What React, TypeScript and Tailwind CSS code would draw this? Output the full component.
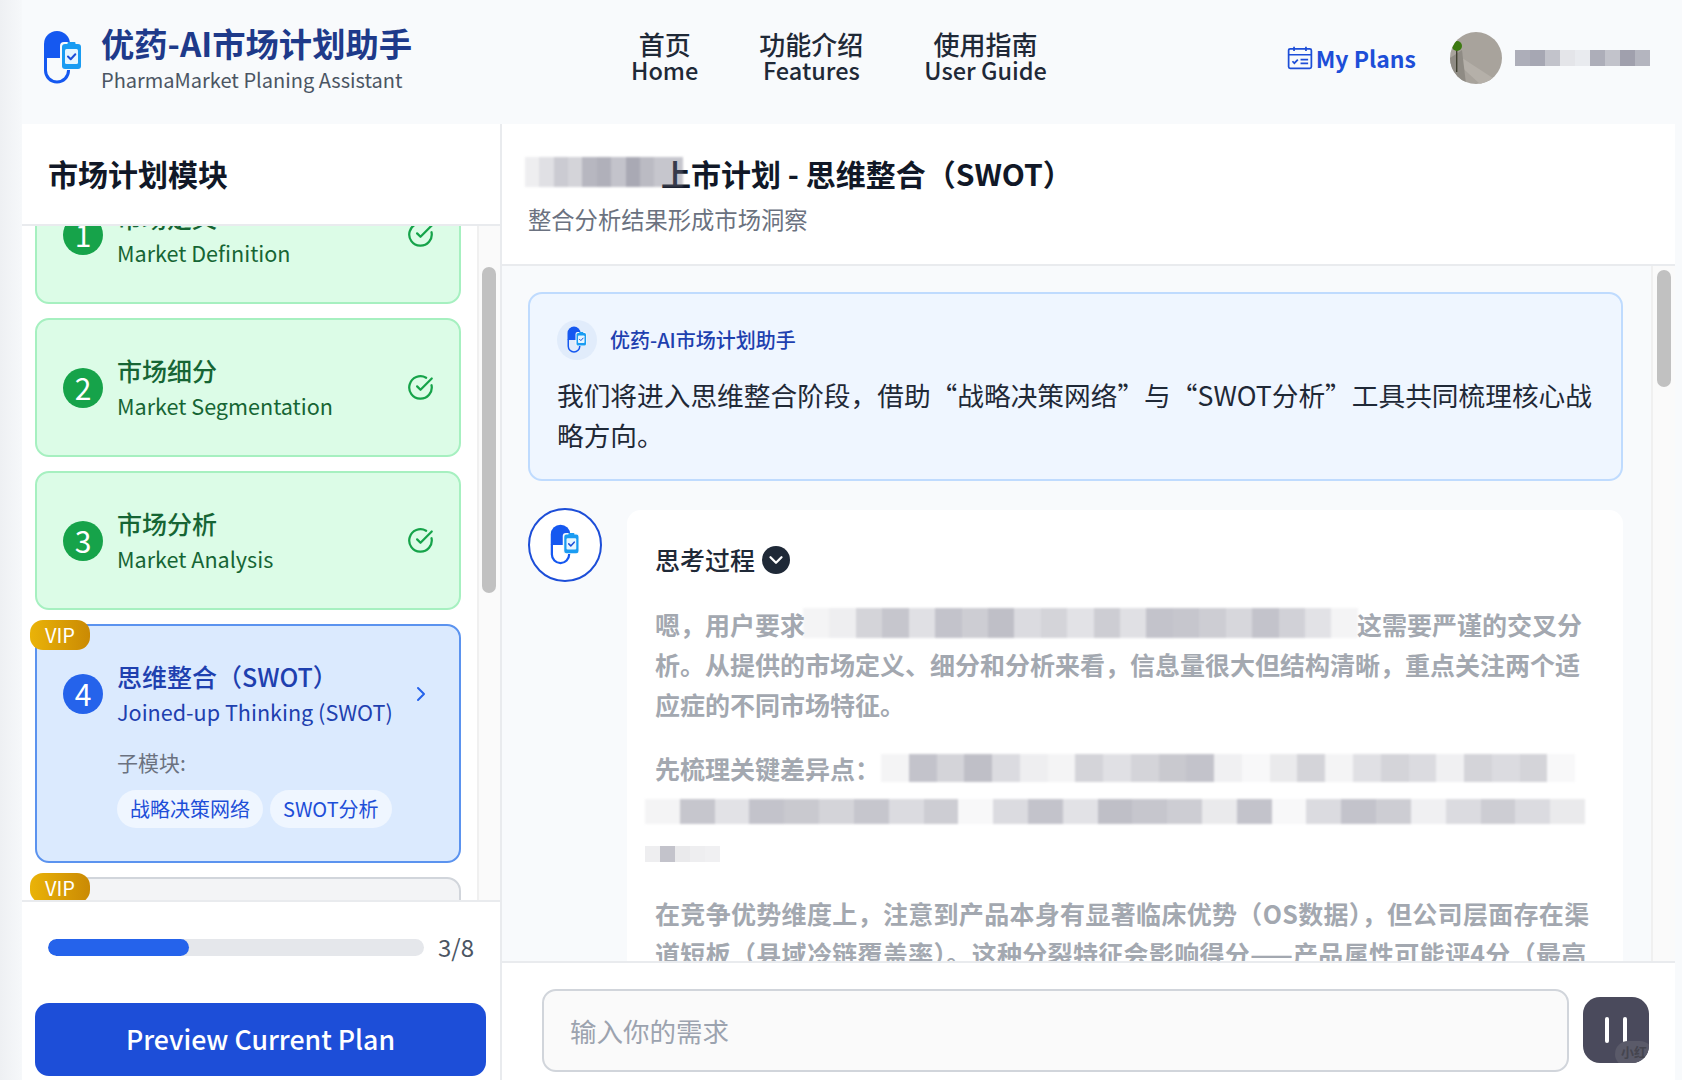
import React from "react";
import { ChevronDown, ChevronRight, CircleCheckBig } from "lucide-react";
import { clsx } from "clsx";

// pixelated cover over private text, each value is one cell's darkness
function Mosaic({ cells, className }: { cells: number[]; className?: string }) {
  return (
    <div className={clsx("flex", className)}>
      {cells.map((v, i) => (
        <span key={i} className="h-full flex-1" style={{ backgroundColor: `rgba(112,112,130,${v})` }} />
      ))}
    </div>
  );
}

function Logo({ className }: { className?: string }) {
  return (
    <svg viewBox="0 0 40 56" className={className} fill="none">
      <path d="M1 28V14a13 13 0 0 1 26 0v14z" fill="#1558f0" />
      <path d="M2.5 28v12.5a11.5 11.5 0 0 0 23 0V38" stroke="#1558f0" strokeWidth="3" strokeLinecap="round" />
      <rect x="17" y="12" width="22" height="28" rx="4" fill="#f8fafc" />
      <rect x="19" y="14" width="19" height="25" rx="3" fill="#1a9cf2" />
      <rect x="22" y="19" width="13" height="15" rx="1.5" fill="#e6f6ff" />
      <rect x="24.5" y="12" width="8" height="4.5" rx="1" fill="#1a9cf2" />
      <path d="M25 26.5l2.7 2.7 4.6-5" stroke="#1d4ed8" strokeWidth="2" strokeLinecap="round" strokeLinejoin="round" />
    </svg>
  );
}

function NavItem({ zh, en }: { zh: string; en: string }) {
  return (
    <a className="flex flex-col items-center text-[#1f2937] font-medium leading-[26px]">
      <span className="text-[26px]">{zh}</span>
      <span className="text-[23.5px]">{en}</span>
    </a>
  );
}

function DoneCard({ n, zh, en, top }: { n: number; zh: string; en: string; top?: boolean }) {
  return (
    <div className={clsx("h-[139px] shrink-0 rounded-[14px] border-2 border-[#a6f0c0] bg-[#dcfce7] pl-[26px] pr-[25px] flex items-center", top && "-mt-[61px]")}>
      <div className="w-10 h-10 rounded-full bg-[#16a34a] text-white text-[30px] flex items-center justify-center shrink-0">{n}</div>
      <div className="ml-[14px] flex-1 text-[#166534]">
        <div className="text-[25px] leading-[36px] font-medium">{zh}</div>
        <div className="text-[21.6px] leading-[35px]">{en}</div>
      </div>
      <CircleCheckBig size={27} strokeWidth={2} className="text-[#16a34a]" />
    </div>
  );
}

function VipBadge() {
  return (
    <span className="absolute -top-[6px] -left-[7px] w-[60px] h-[30px] rounded-[13px] bg-gradient-to-r from-[#eab308] to-[#ca8a04] text-white text-[20px] leading-[30px] text-center">
      VIP
    </span>
  );
}

export default function App() {
  return (
    <div className="w-screen h-screen overflow-hidden flex bg-[#f8fafc] font-['Noto_Sans_CJK_SC','Noto_Sans',sans-serif]">
      <div className="w-[22px] shrink-0 bg-gradient-to-r from-[#eef0f3] to-[#f6f8fa]" />

      <div className="flex-1 min-w-0 flex flex-col pr-[7px]">
        {/* top bar */}
        <header className="h-[124px] shrink-0 flex items-center pl-[21px] pr-[25px] pb-[8px]">
          <Logo className="w-10 h-14" />
          <div className="ml-[18px] -mt-[2px] w-[420px]">
            <div className="text-[33.3px] leading-[44px] font-bold text-[#1e3a8a] whitespace-nowrap">优药-AI市场计划助手</div>
            <div className="text-[20px] leading-[26px] mt-[2px] text-[#4b5563] whitespace-nowrap">PharmaMarket Planing Assistant</div>
          </div>
          <nav className="ml-[110px] -mt-[3px] flex gap-[61px]">
            <NavItem zh="首页" en="Home" />
            <NavItem zh="功能介绍" en="Features" />
            <NavItem zh="使用指南" en="User Guide" />
          </nav>
          <a className="ml-auto flex items-center text-[#1d4ed8] text-[23px] font-bold">
            <svg viewBox="0 0 24 24" className="w-[26px] h-[26px] mr-[3px]" fill="none" stroke="currentColor" strokeWidth="1.6">
              <rect x="1.5" y="3.5" width="21" height="18" rx="1.5" />
              <path d="M1.5 9h21M6.5 1.5v4M17.5 1.5v4" />
              <path d="M5 15l1.8 1.8L10 13.5M12.5 13.5h7M12.5 17h7" />
            </svg>
            My Plans
          </a>
          <svg viewBox="0 0 52 52" className="ml-[34px] w-[52px] h-[52px] shrink-0">
            <clipPath id="avatarClip"><circle cx="26" cy="26" r="26" /></clipPath>
            <g clipPath="url(#avatarClip)">
              <rect width="52" height="52" fill="#a8a39c" />
              <path d="M6 22L52 52H30L6 30z" fill="#b5b0a9" />
              <path d="M0 26l12-8 4 34H0z" fill="#8f8b84" />
              <rect x="6" y="16" width="1.4" height="24" fill="#3f3f30" />
              <circle cx="7" cy="14" r="5" fill="#3d7a12" />
            </g>
          </svg>
          <Mosaic cells={[0.55, 0.6, 0.4, 0.15, 0.1, 0.55, 0.4, 0.65, 0.5]} className="ml-[13px] w-[135px] h-[16px] shrink-0" />
        </header>

        <div className="flex-1 min-h-0 flex">
          {/* module sidebar */}
          <aside className="w-[480px] shrink-0 bg-white border-r-2 border-[#e9ebee] flex flex-col">
            <div className="h-[102px] shrink-0 flex items-center px-[26px] pb-[2px] border-b-2 border-[#e9ebee] text-[30px] font-bold text-[#111827]">
              市场计划模块
            </div>
            <div className="flex-1 min-h-0 flex">
              <div className="flex-1 min-w-0 overflow-hidden pl-[13px] pr-[16px] flex flex-col gap-[14px]">
                <DoneCard top n={1} zh="市场定义" en="Market Definition" />
                <DoneCard n={2} zh="市场细分" en="Market Segmentation" />
                <DoneCard n={3} zh="市场分析" en="Market Analysis" />
                <div className="relative shrink-0 h-[239px] rounded-[14px] border-2 border-[#5b93ef] bg-[#dbeafe] pl-[26px] pr-[27px] pt-[32px]">
                  <VipBadge />
                  <div className="flex items-center text-[#1e40af]">
                    <div className="w-10 h-10 rounded-full bg-[#2563eb] text-white text-[30px] flex items-center justify-center shrink-0">4</div>
                    <div className="ml-[14px] flex-1">
                      <div className="text-[25px] leading-[36px] font-medium whitespace-nowrap">思维整合（SWOT）</div>
                      <div className="text-[21.6px] leading-[35px] whitespace-nowrap">Joined-up Thinking (SWOT)</div>
                    </div>
                    <ChevronRight size={24} strokeWidth={2} className="text-[#2563eb] -mr-[1px]" />
                  </div>
                  <div className="ml-[54px] mt-[19px] text-[21px] leading-[28px] text-[#6b7280]">子模块:</div>
                  <div className="ml-[54px] mt-[14px] flex gap-[7px] text-[20px] text-[#1d4ed8]">
                    <span className="h-[38px] leading-[38px] rounded-full bg-[#eff6ff] px-[13px]">战略决策网络</span>
                    <span className="h-[38px] leading-[38px] rounded-full bg-[#eff6ff] px-[13px]">SWOT分析</span>
                  </div>
                </div>
                <div className="relative shrink-0 h-[139px] rounded-[14px] border-2 border-[#d1d5db] bg-[#f3f4f6]">
                  <VipBadge />
                </div>
              </div>
              <div className="w-[23px] shrink-0 border-l-2 border-[#f0f0f0] bg-[#fafafa] pl-[3px] pt-[41px]">
                <div className="w-[14px] h-[326px] rounded-full bg-[#c1c1c1]" />
              </div>
            </div>
            <div className="h-[180px] shrink-0 border-t-2 border-[#e9ebee] px-[13px]">
              <div className="flex items-center pl-[13px] h-[90px] mb-[11px]">
                <div className="w-[376px] h-[17px] rounded-full bg-[#e5e7eb] overflow-hidden">
                  <div className="w-[141px] h-full rounded-full bg-[#2563eb]" />
                </div>
                <span className="ml-[14px] text-[24px] text-[#4b5563]">3/8</span>
              </div>
              <button className="block w-[451px] h-[73px] rounded-[14px] bg-[#1d4ed8] text-white text-[26.7px] font-medium">
                Preview Current Plan
              </button>
            </div>
          </aside>

          {/* chat */}
          <main className="flex-1 min-w-0 flex flex-col bg-white">
            <div className="h-[142px] shrink-0 border-b-2 border-[#e9ebee] pl-[26px] pt-[29px]">
              <div className="relative h-[40px] pl-[131px] text-[30px] leading-[40px] font-bold text-[#111827] whitespace-nowrap">
                <span className="ml-[2px]">上市计划 - 思维整合（SWOT）</span>
                <Mosaic cells={[0.12, 0.22, 0.36, 0.3, 0.5, 0.55, 0.42, 0.6, 0.48, 0.4, 0.4]} className="absolute left-[-3px] top-[4px] w-[158px] h-[30px] blur-[1px]" />
              </div>
              <div className="mt-[10px] text-[23.3px] leading-[32px] text-[#6b7280]">整合分析结果形成市场洞察</div>
            </div>

            <div className="flex-1 min-h-0 flex bg-[#f8fafc]">
              <div className="flex-1 min-w-0 overflow-hidden pl-[26px] pr-[28px] pt-[26px]">
                <div className="h-[189px] rounded-[14px] border-2 border-[#bfdbfe] bg-[#eff6ff] pl-[27px] pr-[10px] pt-[26px]">
                  <div className="flex items-center">
                    <div className="w-10 h-10 rounded-full bg-[#e1ecfb] flex items-center justify-center">
                      <Logo className="w-[20px] h-[28px]" />
                    </div>
                    <span className="ml-[13px] text-[20px] font-medium text-[#1e40af]">优药-AI市场计划助手</span>
                  </div>
                  <p className="mt-[15px] text-[26.7px] leading-[40px] text-[#1f2937]">
                    我们将进入思维整合阶段，借助“战略决策网络”与“SWOT分析”工具共同梳理核心战略方向。
                  </p>
                </div>

                <div className="mt-[27px] flex gap-[25px]">
                  <div className="w-[74px] h-[74px] shrink-0 rounded-full border-2 border-[#1d4ed8] bg-white flex items-center justify-center">
                    <Logo className="w-[30px] h-[42px]" />
                  </div>
                  <div className="flex-1 min-w-0 mt-[2px] rounded-[14px] bg-white pl-[28px] pr-[30px] pt-[32px] pb-[40px]">
                    <div className="flex items-center h-[36px] text-[25px] font-medium text-[#1f2937]">
                      思考过程
                      <span className="ml-[7px] w-[28px] h-[28px] rounded-full bg-[#1f2937] flex items-center justify-center">
                        <ChevronDown size={22} strokeWidth={2.5} className="text-white" />
                      </span>
                    </div>
                    <div className="mt-[26px] text-[25px] leading-[40px] font-semibold text-[#a3a8b0] whitespace-nowrap">
                      <div className="relative">
                        嗯，用户要求
                        <Mosaic
                          cells={[0.08, 0.12, 0.3, 0.4, 0.22, 0.42, 0.35, 0.45, 0.25, 0.3, 0.2, 0.35, 0.22, 0.42, 0.4, 0.35, 0.28, 0.42, 0.32, 0.2, 0.08]}
                          className="absolute left-[148px] top-[4px] w-[555px] h-[30px] blur-[1px]"
                        />
                        <span className="absolute left-[702px] top-0">这需要严谨的交叉分</span>
                      </div>
                      <div>析。从提供的市场定义、细分和分析来看，信息量很大但结构清晰，重点关注两个适</div>
                      <div>应症的不同市场特征。</div>

                      <div className="relative mt-[24px]">
                        先梳理关键差异点：
                        <Mosaic
                          cells={[0.08, 0.42, 0.3, 0.45, 0.25, 0.12, 0.08, 0.3, 0.22, 0.3, 0.38, 0.42, 0.1, 0.05, 0.15, 0.3, 0.08, 0.22, 0.3, 0.25, 0.1, 0.3, 0.25, 0.3, 0.05]}
                          className="absolute left-[226px] top-[6px] w-[694px] h-[28px] blur-[1px]"
                        />
                      </div>
                      <Mosaic
                        cells={[0.08, 0.4, 0.2, 0.42, 0.38, 0.3, 0.4, 0.25, 0.35, 0.05, 0.25, 0.42, 0.2, 0.45, 0.4, 0.35, 0.15, 0.42, 0.05, 0.25, 0.42, 0.35, 0.1, 0.25, 0.35, 0.25, 0.15]}
                        className="-ml-[10px] mt-[11px] mb-[7px] w-[940px] h-[25px] blur-[1px]"
                      />
                      <Mosaic cells={[0.12, 0.42, 0.15, 0.12, 0.1]} className="-ml-[10px] mt-[22px] w-[75px] h-[16px]" />

                      <div className="mt-[31px] tracking-[0.32px]">在竞争优势维度上，注意到产品本身有显著临床优势（OS数据），但公司层面存在渠</div>
                      <div className="tracking-[0.32px]">道短板（县域冷链覆盖率）。这种分裂特征会影响得分——产品属性可能评4分（最高</div>
                    </div>
                  </div>
                </div>
              </div>
              <div className="w-[24px] shrink-0 border-l-2 border-[#f0f0f0] bg-[#fafafa] pl-[4px] pt-[4px]">
                <div className="w-[14px] h-[117px] rounded-full bg-[#c1c1c1]" />
              </div>
            </div>

            <div className="h-[119px] shrink-0 border-t-2 border-[#e9ebee] flex items-start pl-[40px] pt-[26px]">
              <div className="w-[1027px] h-[83px] rounded-[14px] border-2 border-[#d1d5db] bg-[#fafafa] flex items-center pl-[26px] text-[26.5px] text-[#9ca3af]">
                输入你的需求
              </div>
              <button className="relative ml-[14px] mt-[8px] w-[66px] h-[66px] rounded-[17px] bg-[#4a4a5c] overflow-hidden flex items-center justify-center gap-[14px]">
                <span className="w-[4px] h-[26px] rounded-full bg-white" />
                <span className="w-[4px] h-[26px] rounded-full bg-white" />
                <span className="absolute -right-[4px] -bottom-[4px] w-[38px] h-[26px] rounded-full bg-[#5a5a69] text-[13px] leading-[22px] font-bold text-[#45454f] text-center">小红</span>
              </button>
            </div>
          </main>
        </div>
      </div>
    </div>
  );
}
